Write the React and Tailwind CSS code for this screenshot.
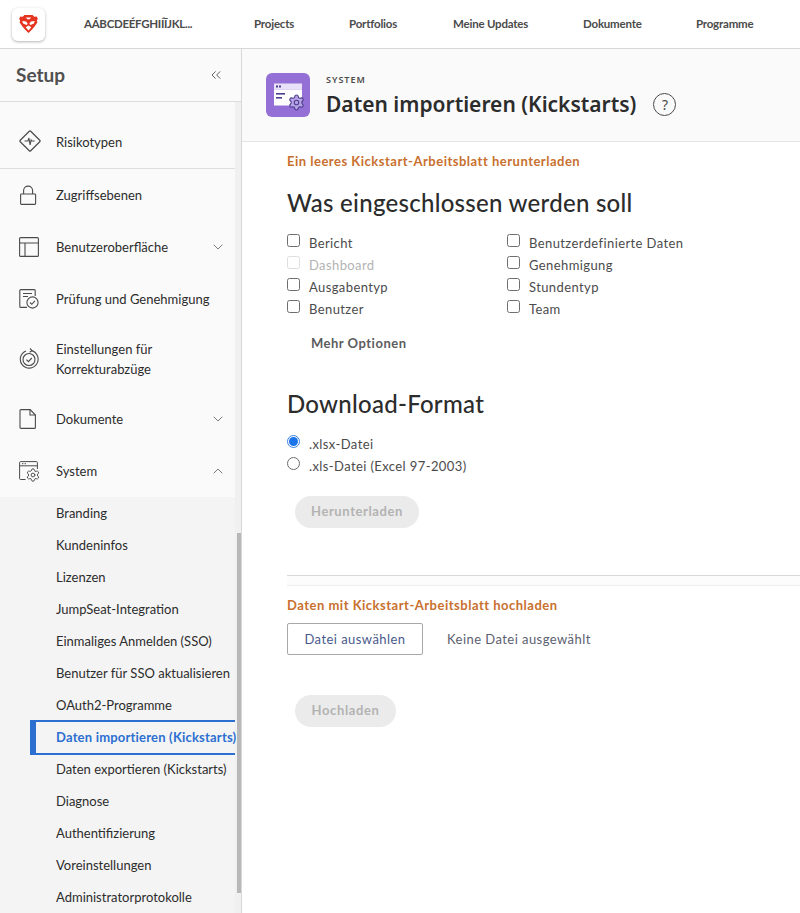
import React from 'react';
import { ChevronDown, ChevronUp, ChevronsLeft, Settings } from 'lucide-react';

const topLinks = [
  { label: 'Projects', width: 'w-[95px]' },
  { label: 'Portfolios', width: 'w-[104px]' },
  { label: 'Meine Updates', width: 'w-[130px]' },
  { label: 'Dokumente', width: 'w-[113px]' },
  { label: 'Programme', width: 'w-[100px]' },
];

const subItems = [
  'Branding',
  'Kundeninfos',
  'Lizenzen',
  'JumpSeat-Integration',
  'Einmaliges Anmelden (SSO)',
  'Benutzer für SSO aktualisieren',
  'OAuth2-Programme',
  'Daten importieren (Kickstarts)',
  'Daten exportieren (Kickstarts)',
  'Diagnose',
  'Authentifizierung',
  'Voreinstellungen',
  'Administratorprotokolle',
];

const leftChecks = [
  { label: 'Bericht' },
  { label: 'Dashboard', disabled: true },
  { label: 'Ausgabentyp' },
  { label: 'Benutzer' },
];
const rightChecks = [
  { label: 'Benutzerdefinierte Daten' },
  { label: 'Genehmigung' },
  { label: 'Stundentyp' },
  { label: 'Team' },
];

const RiskIcon = () => (
  <svg width="22" height="22" viewBox="0 0 22 22" fill="none" stroke="#4b4b4b" strokeWidth="1.2">
    <rect x="3.6" y="3.6" width="14.8" height="14.8" rx="1" transform="rotate(45 11 11)" />
    <path d="M5.5 11H9l.9-3 1.2 7 1-5 .6 1h3" strokeWidth="1.1" />
  </svg>
);

const LockIcon = () => (
  <svg width="18" height="20" viewBox="0 0 18 20" fill="none" stroke="#4b4b4b" strokeWidth="1.1">
    <rect x="1.6" y="9" width="15" height="10.4" rx="0.8" />
    <path d="M4.6 9V5.6a4.5 4.5 0 0 1 9 0V9" />
  </svg>
);

const TableIcon = () => (
  <svg width="20" height="20" viewBox="0 0 20 20" fill="none" stroke="#4b4b4b" strokeWidth="1.1">
    <rect x="0.6" y="0.6" width="18.8" height="18.8" rx="1" />
    <path d="M0.6 6h18.8M6 6v13.4" />
  </svg>
);

const ReviewIcon = () => (
  <svg width="20" height="20" viewBox="0 0 20 20" fill="none" stroke="#4b4b4b" strokeWidth="1.1">
    <path d="M8 18.4H1.8a1 1 0 0 1-1-1V1.6a1 1 0 0 1 1-1h13.4a1 1 0 0 1 1 1V7" />
    <path d="M4 4.5h9M4 7.5h5" />
    <circle cx="13.5" cy="13.5" r="5.6" />
    <path d="M11 13.5l1.8 1.8 3.2-3.4" />
  </svg>
);

const ProofIcon = () => (
  <svg width="20" height="22" viewBox="0 0 20 22" fill="none" stroke="#4b4b4b" strokeWidth="1.1">
    <path d="M12.5 2.6A8.9 8.9 0 1 1 7 2.9" />
    <path d="M11 0.5l2 2.1-2.4 1.6" />
    <circle cx="10" cy="11.5" r="6" />
    <path d="M7.4 11.6l2 2 3.4-3.6" />
  </svg>
);

const DocIcon = () => (
  <svg width="18" height="20" viewBox="0 0 18 20" fill="none" stroke="#4b4b4b" strokeWidth="1.1">
    <path d="M2 .6h9.2l5.2 5.4v12.4a1 1 0 0 1-1 1H2a1 1 0 0 1-1-1V1.6a1 1 0 0 1 1-1z" />
    <path d="M11 .6V6h5.4" />
  </svg>
);

const SystemIcon = () => (
  <svg width="21" height="21" viewBox="0 0 21 21" fill="none" strokeWidth="1" className="overflow-visible">
    <path d="M6.5 18.5H1.6a1 1 0 0 1-1-1V1.6a1 1 0 0 1 1-1h15.8a1 1 0 0 1 1 1V8" stroke="#4b4b4b" />
    <path d="M.6 4.8h17.8" stroke="#4b4b4b" />
    <path d="M3 2.7h1.4M5.6 2.7H7" stroke="#4b4b4b" />
    <Settings x="6.5" y="6.5" width="15" height="15" stroke="#4b4b4b" strokeWidth={1.5} fill="#fafafa" />
  </svg>
);

const BraveLogo = () => (
  <svg width="19" height="18" viewBox="0 0 19 18">
    <path d="M5.4 0h8.2l1.6 1.7 2.4-.2 1.2 2-.9 2.2.5 1.7-3 4.3-2.8 3.4L9.5 18l-3.1-2.9-2.8-3.4-3-4.3.5-1.7L.2 3.5l1.2-2 2.4.2z" fill="#e5341f" />
    <path d="M3.2 6l3.9.6 1.6 2.2-1.2 1.2-3.4-1.4zM15.8 6l-3.9.6-1.6 2.2 1.2 1.2 3.4-1.4z" fill="#fff" />
    <path d="M9.5 10.6l-2.8 1.7 2.8 3.2 2.8-3.2z" fill="#fff" />
    <path d="M6.8 2.6h5.4l-1.6 1.6H8.4z" fill="#fff" />
  </svg>
);

const NavItem = ({ icon, children, chevron, height = 'h-[52px]' }) => (
  <div className={`${height} flex items-center pl-[19px] pr-[9px]`}>
    <div className="w-[37px] shrink-0 flex items-center">{icon}</div>
    <div className="flex-1 text-[13px] leading-5 text-[#2c2c2c]">{children}</div>
    {chevron === 'down' && <ChevronDown size={16} strokeWidth={1.1} className="text-[#4b4b4b]" />}
    {chevron === 'up' && <ChevronUp size={16} strokeWidth={1.1} className="text-[#4b4b4b]" />}
  </div>
);

const Check = ({ label, disabled }) => (
  <label className={`h-[22px] flex items-start ${disabled ? 'text-[#b3b3b3]' : 'text-[#4b4b4b]'}`}>
    <span className={`w-[13px] h-[13px] mt-[2px] mr-[9px] rounded-[2.5px] border bg-white ${disabled ? 'border-[#dedede] bg-[#fafafa]' : 'border-[#6e6e6e]'}`} />
    <span className="text-[13px] leading-[22px] tracking-[0.4px]">{label}</span>
  </label>
);

const Radio = ({ label, checked }) => (
  <div className="h-[22px] flex items-start text-[#4b4b4b]">
    {checked ? (
      <span className="w-[13px] h-[13px] mr-[9px] mt-[1px] rounded-full border border-[#3b82e8] flex items-center justify-center">
        <span className="w-[9px] h-[9px] rounded-full bg-[#1a73e8]" />
      </span>
    ) : (
      <span className="w-[13px] h-[13px] mr-[9px] mt-[1px] rounded-full border border-[#6e6e6e]" />
    )}
    <span className="text-[13px] leading-[21px] tracking-[0.4px]">{label}</span>
  </div>
);

export default function App() {
  return (
    <div className="w-[800px] h-[913px] overflow-hidden bg-white flex flex-col font-['Lato',sans-serif]">
      {/* top bar */}
      <header className="h-[49px] shrink-0 border-b border-[#d8d8d8] flex items-center bg-white">
        <div className="w-[84px] pl-3 shrink-0">
          <div className="w-[33px] h-[33px] rounded-md bg-white shadow-[0_1px_3px_rgba(0,0,0,0.3)] flex items-center justify-center">
            <BraveLogo />
          </div>
        </div>
        <div className="w-[170px] shrink-0 text-[11.5px] font-bold text-[#4b4b4b] tracking-[-0.3px]">AÁBCDEÉFGHIÍĨJKL...</div>
        {topLinks.map((l) => (
          <div key={l.label} className={`${l.width} shrink-0 text-[11.5px] font-bold text-[#4b4b4b] tracking-[-0.2px]`}>
            {l.label}
          </div>
        ))}
      </header>

      <div className="flex flex-1 min-h-0">
        {/* sidebar */}
        <aside className="w-[242px] shrink-0 border-r border-[#d8d8d8] bg-[#fafafa] flex flex-col overflow-hidden">
          <div className="h-[53px] shrink-0 border-b border-[#dedede] flex items-center pl-4 pr-[17px] justify-between">
            <span className="text-[19px] font-bold text-[#505050]">Setup</span>
            <ChevronsLeft size={16} strokeWidth={1.1} className="text-[#2c2c2c]" />
          </div>
          <div className="flex flex-1 min-h-0">
            <div className="w-[235px] shrink-0">
              <div className="h-[67px] border-b border-[#dedede] flex items-end pl-[19px] pb-[16px]">
                <div className="w-[37px] shrink-0"><RiskIcon /></div>
                <div className="text-[13px] leading-5 text-[#2c2c2c]">Risikotypen</div>
              </div>
              <NavItem icon={<LockIcon />}>Zugriffsebenen</NavItem>
              <NavItem icon={<TableIcon />} chevron="down">Benutzeroberfläche</NavItem>
              <NavItem icon={<ReviewIcon />}>Prüfung und Genehmigung</NavItem>
              <NavItem icon={<ProofIcon />} height="h-[68px]">Einstellungen für<br />Korrekturabzüge</NavItem>
              <NavItem icon={<DocIcon />} chevron="down">Dokumente</NavItem>
              <NavItem icon={<SystemIcon />} chevron="up">System</NavItem>
              <div className="bg-[#f4f4f4] pt-px pb-2">
                {subItems.map((s) =>
                  s === 'Daten importieren (Kickstarts)' ? (
                    <div key={s} className="h-[35px] -mt-[2px] -mb-px relative ml-[30px] border-y-2 border-l-[6px] border-[#2c6fd1] pl-5 flex items-center text-[13px] font-bold text-[#2c6fd1] whitespace-nowrap tracking-[0.2px]">
                      {s}
                    </div>
                  ) : (
                    <div key={s} className="h-8 pl-14 flex items-center text-[13px] text-[#2c2c2c] whitespace-nowrap">{s}</div>
                  )
                )}
              </div>
            </div>
            <div className="w-[6px] bg-[#f0f0f0] flex flex-col">
              <div className="h-[431px] shrink-0" />
              <div className="h-[360px] ml-[2px] bg-[#b8b8b8]" />
            </div>
          </div>
        </aside>

        {/* main */}
        <main className="flex-1 min-w-0 flex flex-col">
          <div className="h-[93px] shrink-0 bg-[#fafafa] border-b border-[#e4e4e4] flex items-start pl-6 pt-6">
            <div className="w-11 h-11 rounded-md bg-[#9470d6] flex items-center justify-center">
              <svg width="30" height="30" viewBox="0 0 30 30" className="overflow-visible">
                <rect x="1" y="3.5" width="28" height="6" fill="#e9e1f7" />
                <rect x="1" y="9.5" width="28" height="16" fill="#fff" />
                <rect x="3" y="5.5" width="2" height="2" fill="#4d3f8f" />
                <rect x="6" y="5.5" width="2" height="2" fill="#4d3f8f" />
                <rect x="3" y="13" width="9" height="1.6" fill="#4d3f8f" />
                <rect x="3" y="17" width="6" height="1.6" fill="#4d3f8f" />
                <Settings x="14.5" y="13.5" width="18" height="18" stroke="#4d3f8f" strokeWidth={1.5} fill="#b8a3e6" />
              </svg>
            </div>
            <div className="ml-4 font-['Noto_Sans',sans-serif]">
              <div className="text-[9px] leading-3 mt-[1px] font-semibold tracking-[1px] text-[#4b4b4b]">SYSTEM</div>
              <div className="flex items-center mt-[2px]">
                <h1 className="text-[21px] leading-8 font-semibold text-[#2c2c2c]">Daten importieren (Kickstarts)</h1>
                <span className="ml-[17px] w-[23px] h-[23px] rounded-full border border-[#4b4b4b] flex items-center justify-center text-[14px] text-[#4b4b4b]">?</span>
              </div>
            </div>
          </div>

          <div className="pl-[45px] flex-1">
            <a className="block mt-[11px] text-[13px] leading-4 font-bold text-[#c8702e] tracking-[0.5px]">Ein leeres Kickstart-Arbeitsblatt herunterladen</a>
            <h2 className="mt-[18px] text-[24px] leading-8 font-medium text-[#2c2c2c] tracking-[0.27px]">Was eingeschlossen werden soll</h2>
            <div className="mt-[13px] flex">
              <div className="w-[220px]">
                {leftChecks.map((c) => <Check key={c.label} {...c} />)}
              </div>
              <div>
                {rightChecks.map((c) => <Check key={c.label} {...c} />)}
              </div>
            </div>
            <div className="mt-[15px] pl-6 text-[13px] leading-4 font-bold text-[#5c5c5c] tracking-[0.5px]">Mehr Optionen</div>
            <h2 className="mt-[37px] text-[24px] leading-8 font-medium text-[#2c2c2c] tracking-[0.27px]">Download-Format</h2>
            <div className="mt-[14px]">
              <Radio label=".xlsx-Datei" checked />
              <Radio label=".xls-Datei (Excel 97-2003)" />
            </div>
            <button className="mt-[18px] ml-2 h-8 w-[124px] rounded-full bg-[#ebebeb] text-[13px] font-bold text-[#b3b3b3] tracking-[0.6px]">Herunterladen</button>
            <div className="mt-[47px] h-[11px] border-y border-t-[#d8d8d8] border-b-[#eeeeee] bg-[#fcfcfc]" />
            <div className="mt-[11px] text-[13px] leading-4 font-bold text-[#c8702e] tracking-[0.5px]">Daten mit Kickstart-Arbeitsblatt hochladen</div>
            <div className="mt-[10px] flex items-center">
              <button className="w-[136px] h-8 pt-px border border-[#a8a8a8] rounded-[2px] text-[13px] text-[#4a5a8c] tracking-[0.45px]">Datei auswählen</button>
              <span className="ml-6 pt-px text-[13px] text-[#5c6070] tracking-[0.45px]">Keine Datei ausgewählt</span>
            </div>
            <button className="mt-[40px] ml-2 h-8 w-[101px] rounded-full bg-[#ebebeb] text-[13px] font-bold text-[#b3b3b3] tracking-[0.6px]">Hochladen</button>
          </div>
        </main>
      </div>
    </div>
  );
}
